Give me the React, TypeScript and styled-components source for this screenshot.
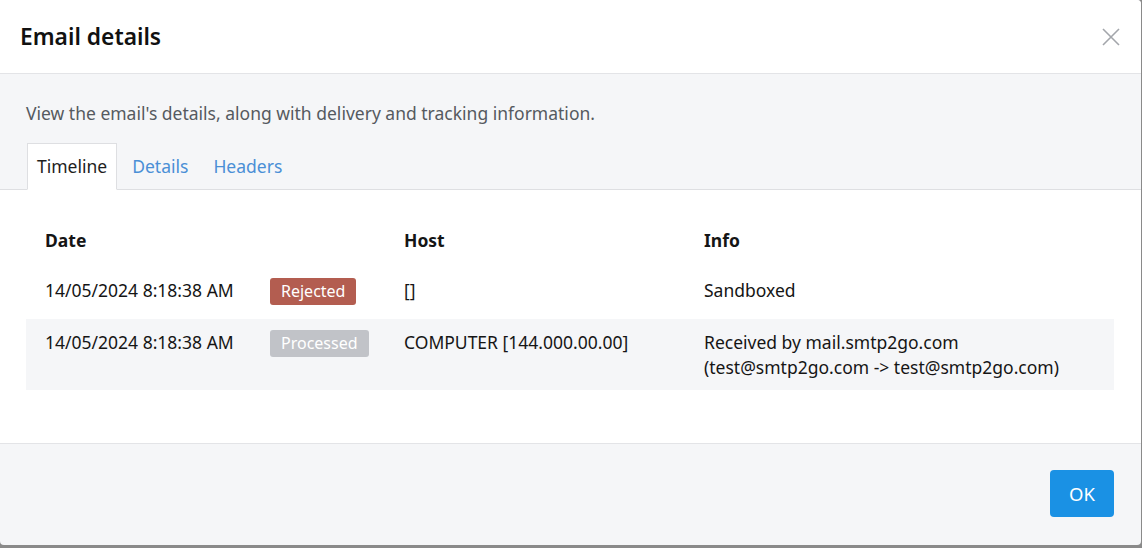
import React from 'react';
import styled, { createGlobalStyle } from 'styled-components';

const GlobalStyle = createGlobalStyle`
  html, body {
    margin: 0;
    padding: 0;
    background: #8a8a8a;
    font-family: 'Noto Sans', 'Open Sans', Arial, sans-serif;
    color: #1e1e1e;
  }
  * {
    box-sizing: border-box;
  }
`;

const Modal = styled.div`
  width: 1141px;
  height: 545px;
  background: #f5f6f8;
  border-radius: 0 4px 4px 4px;
  overflow: hidden;
  display: flex;
  flex-direction: column;
`;

const Header = styled.div`
  height: 74px;
  flex-shrink: 0;
  background: #fff;
  border-bottom: 1px solid #e3e4e7;
  display: flex;
  align-items: center;
  justify-content: space-between;
  padding: 1px 21px 0 20px;
`;

const Title = styled.h2`
  margin: 0;
  font-size: 22.8px;
  font-weight: 600;
  color: #111;
  line-height: 1;
`;

const CloseButton = styled.button`
  border: 0;
  background: none;
  padding: 0;
  width: 18px;
  height: 18px;
  margin-bottom: 1px;
  cursor: pointer;
  display: flex;
`;

const Intro = styled.div`
  padding: 27px 26px 0;
`;

const Description = styled.p`
  margin: 0 0 17px;
  font-size: 17.5px;
  line-height: 25px;
  color: #555a60;
`;

const TabBar = styled.div`
  display: flex;
  margin: 0 -26px;
  padding: 0 26px 0 27px;
  border-bottom: 1px solid #dedfe2;
`;

const Tab = styled.button<{ $active?: boolean }>`
  font-family: inherit;
  font-size: 17.5px;
  line-height: 25px;
  height: 47px;
  padding: 0 9px 0 ${(p) => (p.$active ? '9px' : '14px')};
  margin-bottom: -1px;
  border: 1px solid ${(p) => (p.$active ? '#dedfe2' : 'transparent')};
  border-bottom-color: ${(p) => (p.$active ? '#fff' : 'transparent')};
  background: ${(p) => (p.$active ? '#fff' : 'transparent')};
  color: ${(p) => (p.$active ? '#1e1e1e' : '#4a8fd6')};
  cursor: pointer;
`;

const Content = styled.div`
  background: #fff;
  padding: 28px 27px 53px 26px;
  border-bottom: 1px solid #e3e4e7;
`;

const Row = styled.div<{ $striped?: boolean; $head?: boolean }>`
  display: grid;
  grid-template-columns: 225px 134px 300px 1fr;
  padding: ${(p) => (p.$head ? '10px 19px 14px' : '10.5px 19px')};
  background: ${(p) => (p.$striped ? '#f5f6f8' : 'transparent')};
  font-size: 17.5px;
  line-height: 25px;
  font-weight: ${(p) => (p.$head ? 700 : 400)};
  color: #151515;
`;

const BadgeCell = styled.div`
  min-height: 31px;
`;

const Badge = styled.span<{ $tone: 'danger' | 'muted' }>`
  display: inline-block;
  margin-top: 0.5px;
  height: 27px;
  line-height: 27px;
  padding: 0 11px;
  border-radius: 3px;
  font-size: 16px;
  color: #fff;
  background: ${(p) => (p.$tone === 'danger' ? '#b35d50' : '#c1c3c8')};
`;

const Footer = styled.div`
  flex: 1;
  display: flex;
  justify-content: flex-end;
  align-items: flex-start;
  padding: 26px 27px 0;
`;

const OkButton = styled.button`
  width: 64px;
  height: 47px;
  border: 0;
  border-radius: 4px;
  background: #1a91e4;
  color: #fff;
  font-family: inherit;
  font-size: 18.5px;
  cursor: pointer;
`;

const events = [
  {
    date: '14/05/2024 8:18:38 AM',
    status: 'Rejected',
    tone: 'danger' as const,
    host: '[]',
    info: ['Sandboxed'],
  },
  {
    date: '14/05/2024 8:18:38 AM',
    status: 'Processed',
    tone: 'muted' as const,
    host: 'COMPUTER [144.000.00.00]',
    info: ['Received by mail.smtp2go.com', '(test@smtp2go.com -> test@smtp2go.com)'],
  },
];

const App: React.FC = () => (
  <>
    <GlobalStyle />
    <Modal>
      <Header>
        <Title>Email details</Title>
        <CloseButton aria-label="Close">
          <svg width="18" height="18" viewBox="0 0 18 18">
            <path d="M1 1L17 17M17 1L1 17" stroke="#a3a6ab" strokeWidth="1.6" />
          </svg>
        </CloseButton>
      </Header>
      <Intro>
        <Description>
          View the email's details, along with delivery and tracking information.
        </Description>
        <TabBar>
          <Tab $active>Timeline</Tab>
          <Tab>Details</Tab>
          <Tab>Headers</Tab>
        </TabBar>
      </Intro>
      <Content>
        <Row $head>
          <div>Date</div>
          <div />
          <div>Host</div>
          <div>Info</div>
        </Row>
        {events.map((e, i) => (
          <Row key={i} $striped={i % 2 === 1}>
            <div>{e.date}</div>
            <BadgeCell>
              <Badge $tone={e.tone}>{e.status}</Badge>
            </BadgeCell>
            <div>{e.host}</div>
            <div>
              {e.info.map((line) => (
                <div key={line}>{line}</div>
              ))}
            </div>
          </Row>
        ))}
      </Content>
      <Footer>
        <OkButton>OK</OkButton>
      </Footer>
    </Modal>
  </>
);

export default App;
